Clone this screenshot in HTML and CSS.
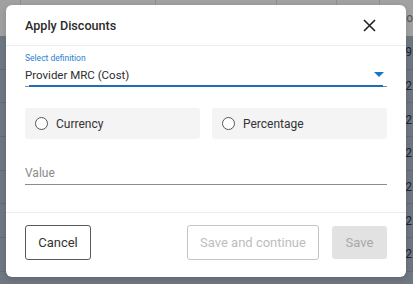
FILE: index.html
```html
<!DOCTYPE html>
<html>
<head>
<meta charset="utf-8">
<link rel="stylesheet" href="styles.css">
</head>
<body>
<div class="table">
  <div class="row head">
    <div class="c c1"></div><div class="c c2"></div><div class="c c3"></div><div class="c c4"></div><div class="c c5"></div><div class="c c6">Do</div>
  </div>
  <div class="row"><div class="c c1"></div><div class="c c2"></div><div class="c c3"></div><div class="c c4"></div><div class="c c5"></div><div class="c c6">19</div></div>
  <div class="row"><div class="c c1"></div><div class="c c2"></div><div class="c c3"></div><div class="c c4"></div><div class="c c5"></div><div class="c c6">02</div></div>
  <div class="row"><div class="c c1"></div><div class="c c2"></div><div class="c c3"></div><div class="c c4"></div><div class="c c5"></div><div class="c c6">02</div></div>
  <div class="row"><div class="c c1"></div><div class="c c2"></div><div class="c c3"></div><div class="c c4"></div><div class="c c5"></div><div class="c c6">02</div></div>
  <div class="row"><div class="c c1"></div><div class="c c2"></div><div class="c c3"></div><div class="c c4"></div><div class="c c5"></div><div class="c c6">02</div></div>
  <div class="row"><div class="c c1"></div><div class="c c2"></div><div class="c c3"></div><div class="c c4"></div><div class="c c5"></div><div class="c c6">02</div></div>
  <div class="row"><div class="c c1"></div><div class="c c2"></div><div class="c c3"></div><div class="c c4"></div><div class="c c5"></div><div class="c c6">02</div></div>
</div>

<div class="dialog">
  <div class="dlg-head">
    <div class="title">Apply Discounts</div>
    <svg class="close" width="13" height="13" viewBox="0 0 13 13"><path d="M1 1 L12 12 M12 1 L1 12" stroke="#222" stroke-width="1.6" fill="none"/></svg>
  </div>
  <div class="dlg-body">
    <div class="select">
      <div class="label">Select definition</div>
      <div class="select-row">
        <span class="select-value">Provider MRC (Cost)</span>
        <svg class="arrow" width="10" height="6" viewBox="0 0 10 6"><path d="M0 0 L10 0 L5 5 Z" fill="#1976c6"/></svg>
      </div>
      <div class="underline"><div class="underline-active"></div></div>
    </div>
    <div class="radios">
      <label class="radio"><span class="dot"></span><span>Currency</span></label>
      <label class="radio"><span class="dot"></span><span>Percentage</span></label>
    </div>
    <div class="value">Value</div>
  </div>
  <div class="dlg-foot">
    <button class="btn cancel">Cancel</button>
    <div class="spacer"></div>
    <button class="btn outline-dis">Save and continue</button>
    <button class="btn fill-dis">Save</button>
  </div>
</div>
</body>
</html>
```

FILE: styles.css
```css
* { box-sizing: border-box; }
html, body { margin: 0; padding: 0; }
body {
  width: 413px;
  height: 284px;
  overflow: hidden;
  position: relative;
  font-family: Roboto, "Liberation Sans", Arial, sans-serif;
  background: #6f7782;
}
.table { display: flex; flex-direction: column; }
.row {
  display: flex;
  height: 33.7px;
  background: #6f7782;
  border-bottom: 1px solid #636b75;
}
.row.head { height: 36px; background: #a1a1a1; border-bottom: none; }
.c { height: 100%; border-right: 1px solid #8f8f8f; }
.row:not(.head) .c { border-right: 1px solid #6a727c; }
.c1 { width: 21px; }
.c2 { width: 137px; }
.c3 { width: 122px; }
.c4 { width: 61px; }
.c5 { width: 44px; }
.c6 {
  flex: 1;
  border-right: none;
  font-size: 12px;
  color: #1c2430;
  padding-left: 18px;
  display: flex;
  align-items: center;
}
.row.head .c6 { color: #555; }

.dialog {
  position: absolute;
  left: 6px;
  top: 5px;
  width: 400px;
  height: 272px;
  background: #fff;
  border-radius: 6px;
  display: flex;
  flex-direction: column;
  box-shadow: 0 2px 6px rgba(0,0,0,0.15);
}
.dlg-head {
  height: 41px;
  border-bottom: 1px solid #ececec;
  display: flex;
  align-items: center;
  justify-content: space-between;
  padding: 0 30px 0 19px;
}
.title {
  font-size: 12.6px;
  font-weight: 500;
  color: #2b2b2b;
  margin-top: 1px;
}
.close { margin-top: 1px; }

.dlg-body {
  flex: 1;
  padding: 7px 19px 0 19px;
  border-bottom: 1px solid #ececec;
}
.label {
  font-size: 8.5px;
  line-height: 11px;
  color: #2a7fcf;
}
.select-row {
  display: flex;
  justify-content: space-between;
  align-items: center;
  height: 21px;
}
.select-value { font-size: 11.5px; color: #2d2d2d; }
.arrow { margin-right: 3px; margin-top: 1px; }
.underline {
  height: 1px;
  background: #8a8a8a;
  position: relative;
  margin-top: 1px;
}
.underline-active {
  position: absolute;
  left: 4px;
  right: 4px;
  top: -1px;
  height: 2px;
  background: #1a6fb8;
}
.radios {
  display: grid;
  grid-template-columns: 1fr 1fr;
  gap: 12px;
  margin-top: 21px;
}
.radio {
  height: 31px;
  background: #f4f4f4;
  border-radius: 3px;
  display: flex;
  align-items: center;
  padding-left: 10px;
  font-size: 12px;
  color: #333;
  gap: 8px;
}
.dot {
  width: 13px;
  height: 13px;
  border: 1px solid #555;
  border-radius: 50%;
  background: #fff;
}
.value {
  margin-top: 24px;
  font-size: 12px;
  color: #8a8a8a;
  line-height: 20px;
  padding-bottom: 1px;
  border-bottom: 1px solid #8c8c8c;
}
.dlg-foot {
  height: 64px;
  display: flex;
  align-items: flex-start;
  padding: 12px 19px 0 19px;
  gap: 13px;
}
.spacer { flex: 1; }
.btn {
  font-family: Roboto, "Liberation Sans", Arial, sans-serif;
  font-size: 13px;
  height: 35px;
  border-radius: 3px;
  background: #fff;
  padding: 0;
}
.cancel { width: 66px; border: 1px solid #5a5a5a; color: #333; }
.outline-dis { width: 132px; border: 1px solid #c4c4c4; color: #bdbdbd; }
.fill-dis { width: 55px; height: 33px; margin-top: 1px; border: none; background: #e2e2e2; color: #a8a8a8; }
```
